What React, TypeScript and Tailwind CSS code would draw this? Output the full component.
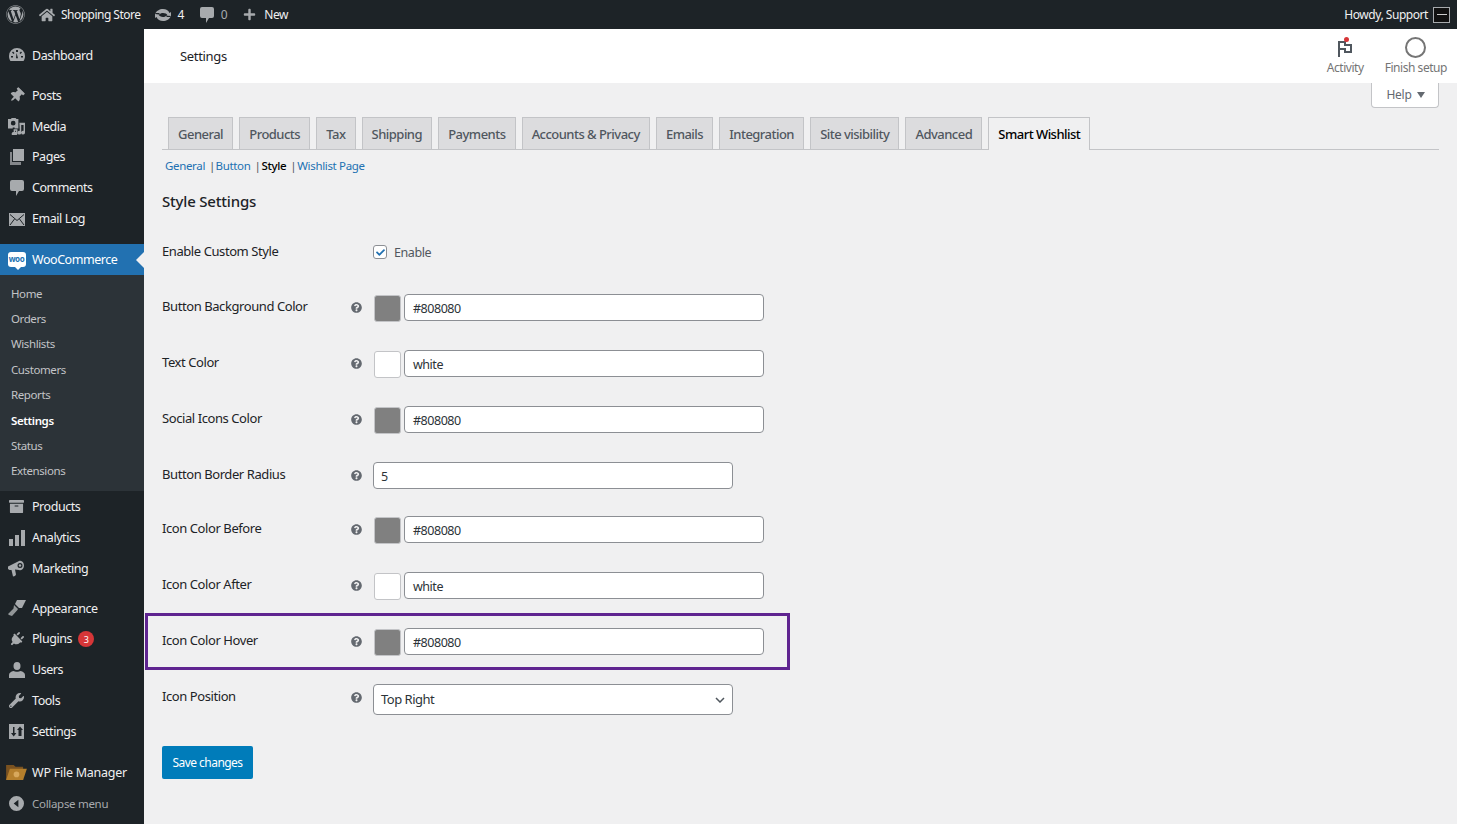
import { FaWordpress, FaHome, FaPlus, FaThumbtack, FaArchive, FaPlug, FaWrench, FaQuestionCircle, FaCheck } from "react-icons/fa";
import type { ReactNode } from "react";

const font = "font-['Noto_Sans',sans-serif]";

function GaugeIcon() {
  return (
    <svg viewBox="0 0 16 14" className="h-[14px] w-[16px]" fill="currentColor">
      <path fillRule="evenodd" d="M8 0a8 8 0 0 1 8 8c0 2-.6 3.800-1.500 5H1.500C.6 11.800 0 10 0 8a8 8 0 0 1 8-8zM7 2v2h2V2zM3 4.500 4.500 6 5.500 5 4 3.500zM12 3.500 10.500 5l1 1L13 4.500zM2 8v1.500h2V8zM12 8v1.500h2V8zM7.500 5 7 10a1.500 1.500 0 0 0 2 0z" />
    </svg>
  );
}

function MediaIcon() {
  return (
    <svg viewBox="0 0 18 18" className="size-[17px]" fill="currentColor">
      <path fillRule="evenodd" d="M0 1h3l1-1h4l1 1h2v10H7v-1H5v1H0zM5.500 3a2.500 2.500 0 1 0 0 5 2.500 2.500 0 0 0 0-5z" />
      <path d="M12 5h6v10.500a2 2 0 1 1-1.500-1.900V7.500H14v8a2 2 0 1 1-1.500-1.900z" />
      <path d="M6 12h4v4.500a1.800 1.800 0 1 1-1.500-1.800v-1.200h-1v3.200a1.800 1.800 0 1 1-1.500-1.800z" />
    </svg>
  );
}

function PagesIcon() {
  return (
    <svg viewBox="0 0 14 16" className="h-[16px] w-[14px]" fill="currentColor">
      <path d="M3 0h11v12H3z" />
      <path d="M0 3h2v10h9v3H0z" opacity="0.75" />
    </svg>
  );
}

function BubbleIcon({ size = 14 }: { size?: number }) {
  return (
    <svg viewBox="0 0 14 16" width={size} height={(size * 16) / 14} fill="currentColor">
      <path d="M2 0h10a2 2 0 0 1 2 2v7a2 2 0 0 1-2 2H9l-3 5v-5H2a2 2 0 0 1-2-2V2a2 2 0 0 1 2-2z" />
    </svg>
  );
}

function MailIcon() {
  return (
    <svg viewBox="0 0 16 13" className="h-[13px] w-[16px]">
      <rect width="16" height="13" fill="currentColor" />
      <path d="M1 1.500 8 7.500 15 1.500M1 12 5.500 6M15 12 10.500 6" fill="none" stroke="#1d2327" strokeWidth="1" />
    </svg>
  );
}

function BarsIcon() {
  return (
    <svg viewBox="0 0 16 16" className="size-[16px]" fill="currentColor">
      <rect x="0" y="9" width="4" height="7" />
      <rect x="6" y="5" width="4" height="11" />
      <rect x="12" y="0" width="4" height="16" />
    </svg>
  );
}

function MegaphoneIcon() {
  return (
    <svg viewBox="0 0 17 17" className="size-[17px]" fill="currentColor">
      <path fillRule="evenodd" d="M0 6.500 11 1c3-1 5 1.500 5 4.500S14 11 11 10L7 9.500l1 5-1 1.500-2 .5-1.500-6.500H1.500L0 9zM12 3a2.500 2.500 0 1 0 0 5 2.500 2.500 0 0 0 0-5z" />
      <circle cx="12" cy="5.500" r="1.200" />
    </svg>
  );
}

function BrushIcon() {
  return (
    <svg viewBox="0 0 18 16" className="h-[16px] w-[18px]" fill="currentColor">
      <path d="M9 0h9l-4 8-3 0-4-4z" />
      <path d="M6 5l4 4-1 1.500L4 16l-3-1-1-1 5.500-5.500z" opacity="0.85" />
    </svg>
  );
}

function UserIcon() {
  return (
    <svg viewBox="0 0 16 16" className="size-[16px]" fill="currentColor">
      <ellipse cx="8" cy="4" rx="3.500" ry="4" />
      <path d="M0 16v-3c0-2 2-3.500 4.500-4C6 10 10 10 11.500 9 14 9.500 16 11 16 13v3z" />
    </svg>
  );
}

function SettingsIcon() {
  return (
    <svg viewBox="0 0 15 15" className="size-[15px]" fill="currentColor">
      <path fillRule="evenodd" d="M0 0h15v15H0zM4 3v6H2l2.700 3.500L7.400 9H5.500V3zM9.500 6H8l3-3.500L14 6h-1.500v6h-3z" />
    </svg>
  );
}

function UpdateIcon() {
  return (
    <svg viewBox="0 0 16 12" className="h-[12px] w-[16px]" fill="currentColor">
      <path fillRule="evenodd" d="M8 0c3 0 5.500 1.500 6.500 4L16 3v5h-5l1.600-1.600C11.800 4.800 10 4 8 4 6.500 4 5 4.600 4 5.500L0 5c1.200-3 4.500-5 8-5zM8 12c-3 0-5.500-1.500-6.500-4L0 9V4h5L3.400 5.600C4.200 7.200 6 8 8 8c1.500 0 3-.6 4-1.500l4 .5c-1.200 3-4.500 5-8 5z" />
    </svg>
  );
}

function WooIcon() {
  return (
    <div className="relative flex h-[15px] w-[18px] items-center justify-center rounded-[3px] bg-white text-[8px] font-bold leading-none tracking-[-0.4px] text-[#2271b1]">
      woo
      <div className="absolute -bottom-[3px] left-[7px] size-0 border-x-[3px] border-t-[3px] border-x-transparent border-t-white" />
    </div>
  );
}

function FolderIcon() {
  return (
    <svg viewBox="0 0 22 18" className="h-[17px] w-[21px]">
      <path d="M0 1h8l2 2h8v14H0z" fill="#7a5220" />
      <path d="M4 5h18l-4 12H0z" fill="#b57f2c" />
      <circle cx="11" cy="11" r="3" fill="#d8a85c" />
    </svg>
  );
}

function CollapseIcon() {
  return (
    <svg viewBox="0 0 16 16" className="size-[15px]" fill="currentColor">
      <path fillRule="evenodd" d="M8 0a8 8 0 1 1 0 16A8 8 0 0 1 8 0zm2 4L5 8l5 4z" />
    </svg>
  );
}

function MenuItem({ icon, label, active, badge, labelClass = "" }: { icon: ReactNode; label: string; active?: boolean; badge?: string; labelClass?: string }) {
  return (
    <div className={`relative flex h-[30.85px] items-center text-[12.5px] tracking-[-0.45px] ${active ? "bg-[#2271b1] text-white" : "text-[#f0f0f1]"}`}>
      <div className={`flex w-[32px] shrink-0 justify-center pl-[1px] ${active ? "text-white" : "text-[#a7aaad]"}`}>{icon}</div>
      <span className={`pt-[1px] ${labelClass}`}>{label}</span>
      {badge && (
        <span className="ml-[6px] flex size-[16px] items-center justify-center rounded-full bg-[#d63638] text-[9px] text-white">{badge}</span>
      )}
      {active && (
        <div className="absolute right-0 top-[8px] size-0 border-y-[8px] border-r-[8px] border-y-transparent border-r-[#f0f0f1]" />
      )}
    </div>
  );
}

const subMenu = ["Home", "Orders", "Wishlists", "Customers", "Reports", "Settings", "Status", "Extensions"];
const tabs = ["General", "Products", "Tax", "Shipping", "Payments", "Accounts & Privacy", "Emails", "Integration", "Site visibility", "Advanced"];

function Sidebar() {
  return (
    <div className="flex w-[144px] shrink-0 flex-col bg-[#1d2327] pt-[11px]">
      <MenuItem icon={<GaugeIcon />} label="Dashboard" />
      <div className="mt-[9.4px]">
        <MenuItem icon={<FaThumbtack size={15} className="rotate-45" />} label="Posts" />
        <MenuItem icon={<MediaIcon />} label="Media" />
        <MenuItem icon={<PagesIcon />} label="Pages" />
        <MenuItem icon={<BubbleIcon size={14} />} label="Comments" />
        <MenuItem icon={<MailIcon />} label="Email Log" />
      </div>
      <div className="mt-[9.6px]">
        <MenuItem icon={<WooIcon />} label="WooCommerce" active />
      </div>
      <div className="flex h-[216.6px] flex-col bg-[#2c3338] pl-[11px] pt-[5.6px] text-[11.5px] tracking-[-0.4px] text-[#c3c4c7]">
        {subMenu.map((item) => (
          <div key={item} className={`flex h-[25.4px] items-center ${item === "Settings" ? "font-semibold text-white" : ""}`}>
            {item}
          </div>
        ))}
      </div>
      <MenuItem icon={<FaArchive size={15} />} label="Products" />
      <MenuItem icon={<BarsIcon />} label="Analytics" />
      <MenuItem icon={<MegaphoneIcon />} label="Marketing" />
      <div className="mt-[9px]">
        <MenuItem icon={<BrushIcon />} label="Appearance" />
        <MenuItem icon={<FaPlug size={15} className="rotate-45" />} label="Plugins" badge="3" />
        <MenuItem icon={<UserIcon />} label="Users" />
        <MenuItem icon={<FaWrench size={15} />} label="Tools" />
        <MenuItem icon={<SettingsIcon />} label="Settings" />
      </div>
      <div className="mt-[10px]">
        <MenuItem icon={<FolderIcon />} label="WP File Manager" labelClass="tracking-[-0.25px]" />
      </div>
      <div className="flex h-[30.85px] items-center text-[11.5px] tracking-[-0.3px] text-[#a7aaad]">
        <div className="flex w-[32px] justify-center"><CollapseIcon /></div>
        <span className="pt-[1px]">Collapse menu</span>
      </div>
    </div>
  );
}

function TopBar() {
  return (
    <div className="flex h-[29px] items-center justify-between bg-[#1d2327] text-[12px] tracking-[-0.45px] text-[#f0f0f1]">
      <div className="flex items-center">
        <FaWordpress size={19} className="ml-[6px] text-[#a7aaad]" />
        <FaHome size={16} className="ml-[14px] text-[#a7aaad]" />
        <span className="ml-[6px] pt-[1px] tracking-[-0.52px]">Shopping Store</span>
        <div className="ml-[15px] text-[#a7aaad]"><UpdateIcon /></div>
        <span className="ml-[6px] pt-[1px]">4</span>
        <div className="ml-[16px] mt-[1px] text-[#a7aaad]"><BubbleIcon size={14} /></div>
        <span className="ml-[7px] pt-[1px] text-[#a7aaad]">0</span>
        <FaPlus size={13} className="ml-[16px] text-[#a7aaad]" />
        <span className="ml-[8px] pt-[1px]">New</span>
      </div>
      <div className="flex items-center pr-[7px]">
        <span className="pt-[1px]">Howdy, Support</span>
        <div className="ml-[5px] flex h-[16px] w-[17px] items-center justify-center border border-[#a7aaad] bg-[#111]">
          <div className="h-[1px] w-[10px] bg-[#ccc]" />
        </div>
      </div>
    </div>
  );
}

function SubLinks() {
  return (
    <div className="ml-[3px] mt-[7px] flex h-[17px] items-center text-[11.5px] tracking-[-0.34px] text-[#2271b1]">
      <span>General</span>
      <span className="ml-[4px] mr-[0.5px] text-[#50575e]">|</span>
      <span>Button</span>
      <span className="ml-[4px] mr-[1px] text-[#50575e]">|</span>
      <span className="font-medium text-black">Style</span>
      <span className="ml-[4px] mr-[1px] text-[#50575e]">|</span>
      <span>Wishlist Page</span>
    </div>
  );
}

function ColorControl({ color, value }: { color: string; value: string }) {
  return (
    <div className="ml-[1px] flex items-start">
      <div className="mt-[1px] size-[27px] rounded-[3px] border border-[#c3c4c7]" style={{ backgroundColor: color }} />
      <div className="ml-[3px] flex h-[27px] w-[360px] items-center rounded-[4px] border border-[#8c8f94] bg-white pl-[8px] pt-[4px] text-[12.5px] tracking-[-0.47px] text-[#2c3338]">
        {value}
      </div>
    </div>
  );
}

function FieldRow({ label, children, height = 56, highlight }: { label: string; children: ReactNode; height?: number; highlight?: boolean }) {
  return (
    <div className={`relative flex items-start ${height === 54 ? "h-[54px]" : "h-[56px]"}`}>
      <div className="w-[189px] pt-[3px] text-[13px] tracking-[-0.42px] text-[#1d2327]">{label}</div>
      <div className="w-[22px] pt-[8px] text-[#646970]"><FaQuestionCircle size={11} /></div>
      <div>{children}</div>
      {highlight && (
        <div className="pointer-events-none absolute -left-[17px] -top-[15px] h-[57px] w-[645px] border-[3px] border-[#5f2490]" />
      )}
    </div>
  );
}

export default function App() {
  return (
    <div className={`flex min-h-[824px] flex-col overflow-hidden bg-[#f0f0f1] ${font}`}>
      <TopBar />
      <div className="flex flex-1">
        <Sidebar />
        <div className="min-w-0 flex-1">
          <div className="flex h-[54px] items-start justify-between bg-white">
            <div className="ml-[36px] mt-[18px] text-[13px] tracking-[-0.33px] text-[#1d2327]">Settings</div>
            <div className="flex text-[12px] tracking-[-0.45px] text-[#757575]">
              <div className="mr-[21px] mt-[8px] flex flex-col items-center">
                <div className="relative h-[20px]">
                  <svg viewBox="0 0 16 18" className="mt-[2px] h-[18px] w-[16px]" fill="none" stroke="#50575e" strokeWidth="2">
                    <path d="M2 18V3h6v3h6v7H8v-3H2" />
                  </svg>
                  <div className="absolute right-[4px] top-0 size-[5px] rounded-full bg-[#d63638]" />
                </div>
                <span className="mt-[2px]">Activity</span>
              </div>
              <div className="mr-[10px] mt-[8px] flex flex-col items-center">
                <div className="size-[21px] rounded-full border-2 border-[#757575]" />
                <span className="mt-[1px]">Finish setup</span>
              </div>
            </div>
          </div>
          <div className="px-[18px]">
            <div className="flex justify-end">
              <div className="flex h-[25px] w-[68px] items-center justify-center gap-[6px] rounded-b-[4px] border border-t-0 border-[#c3c4c7] bg-white pl-[2px] text-[12px] tracking-[-0.3px] text-[#646970]">
                Help
                <svg viewBox="0 0 8 6" className="h-[6px] w-[8px]" fill="#646970">
                  <path d="M0 0h8L4 6z" />
                </svg>
              </div>
            </div>
            <div className="mt-[9px] flex h-[33px] gap-[6px] border-b border-[#c3c4c7] pl-[6px] text-[13px] tracking-[-0.53px]">
              {tabs.map((tab) => (
                <div key={tab} className="flex h-[32px] items-center border border-b-0 border-[#c3c4c7] bg-[#dcdcde] px-[9.1px] pt-[2px] font-medium text-[#50575e]">
                  {tab}
                </div>
              ))}
              <div className="-mb-px flex h-[33px] items-center border border-b-0 border-[#c3c4c7] bg-[#f0f0f1] px-[9.1px] pt-[1px] font-medium text-black">
                Smart Wishlist
              </div>
            </div>
            <SubLinks />
            <h2 className="mt-[16px] text-[15px] font-medium tracking-[-0.2px] text-[#1d2327]">Style Settings</h2>
            <div className="mt-[29px] flex h-[52px] items-start text-[13px] tracking-[-0.42px]">
              <div className="w-[211px] text-[#1d2327]">Enable Custom Style</div>
              <div className="mt-[1px] flex items-center text-[12.5px] tracking-[-0.43px] text-[#50575e]">
                <div className="flex size-[14px] items-center justify-center rounded-[3px] border border-[#8c8f94] bg-white text-[#2271b1]"><FaCheck size={9} /></div>
                <span className="ml-[7px] pt-[1px]">Enable</span>
              </div>
            </div>
            <FieldRow label="Button Background Color"><ColorControl color="#808080" value="#808080" /></FieldRow>
            <FieldRow label="Text Color"><ColorControl color="#ffffff" value="white" /></FieldRow>
            <FieldRow label="Social Icons Color"><ColorControl color="#808080" value="#808080" /></FieldRow>
            <FieldRow label="Button Border Radius" height={54}>
              <div className="flex h-[27px] w-[360px] items-center rounded-[4px] border border-[#8c8f94] bg-white pl-[7px] pt-[4px] text-[12.5px] tracking-[-0.47px] text-[#2c3338]">5</div>
            </FieldRow>
            <FieldRow label="Icon Color Before"><ColorControl color="#808080" value="#808080" /></FieldRow>
            <FieldRow label="Icon Color After"><ColorControl color="#ffffff" value="white" /></FieldRow>
            <FieldRow label="Icon Color Hover" highlight><ColorControl color="#808080" value="#808080" /></FieldRow>
            <div className="relative flex items-start">
              <div className="w-[189px] pt-[3px] text-[13px] tracking-[-0.42px] text-[#1d2327]">Icon Position</div>
              <div className="w-[22px] pt-[8px] text-[#646970]"><FaQuestionCircle size={11} /></div>
              <div className="flex h-[31px] w-[360px] items-center justify-between rounded-[4px] border border-[#8c8f94] bg-white pl-[7px] pr-[7px] pt-[1px] text-[13px] tracking-[-0.5px] text-[#2c3338]">
                Top Right
                <svg viewBox="0 0 10 6" className="h-[6px] w-[10px]" fill="none" stroke="#50575e" strokeWidth="1.500">
                  <path d="M1 1l4 4 4-4" />
                </svg>
              </div>
            </div>
            <button className="mt-[31px] h-[33px] w-[91px] rounded-[2px] bg-[#007cba] pt-[2px] text-[12px] tracking-[-0.53px] text-white">Save changes</button>
          </div>
        </div>
      </div>
    </div>
  );
}
